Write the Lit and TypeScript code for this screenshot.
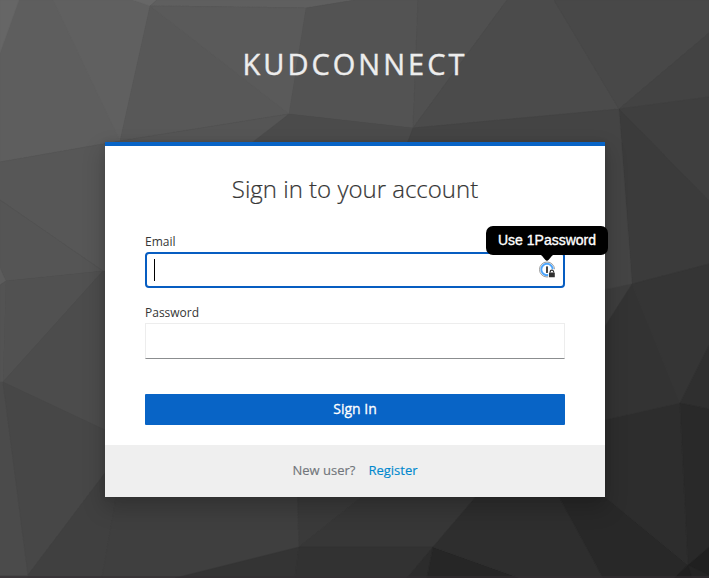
import { LitElement, html, css, svg } from "lit";
import { customElement } from "lit/decorators.js";

// Facets of the low-poly backdrop, painted in order: [fill, points]
const FACETS: [string, string][] = [
  ["#5e5e5e", "0,0 150,0 150,6 120,141 0,162"],
  ["#606060", "53,0 133,0 150,6 120,141"],
  ["#666666", "0,0 19,0 0,53"],
  ["#676767", "133,0 157,0 150,6"],
  ["#5f5f5f", "157,0 355,0 306,8 150,6"],
  ["#585858", "150,6 306,8 289,114 120,141"],
  ["#5a5a5a", "150,6 306,8 289,114"],
  ["#535353", "306,8 355,0 418,0 413,128 289,114"],
  ["#505050", "418,0 507,0 413,128"],
  ["#4b4b4b", "507,0 554,0 619,109 413,128"],
  ["#484848", "554,0 709,0 709,33 619,109"],
  ["#434343", "709,33 709,97 619,109"],
  ["#3f3f3f", "709,97 709,201 619,109"],
  ["#3b3b3b", "619,109 709,201 709,264 632,284"],
  ["#555555", "120,141 289,114 250,148 105,148"],
  ["#4b4b4b", "289,114 413,128 405,148 245,148"],
  ["#444444", "413,128 619,109 632,284 600,290 440,150 405,150"],
  ["#575757", "0,162 120,141 120,275 103,271 0,200"],
  ["#555555", "0,200 103,271 6,281 0,268"],
  ["#5c5c5c", "0,268 6,281 0,285"],
  ["#515151", "6,281 103,271 3,382"],
  ["#535353", "0,285 6,281 3,382 0,382"],
  ["#4c4c4c", "103,271 120,271 120,437 3,382"],
  ["#4b4b4b", "0,382 3,382 28,575 0,575"],
  ["#474747", "3,382 105,430 120,437 120,453 28,575"],
  ["#404040", "28,575 105,473 125,446 102,578 28,578"],
  ["#3f3f3f", "125,446 297,480 299,547 175,578 102,578"],
  ["#3a3a3a", "297,480 383,480 299,547"],
  ["#373737", "383,480 490,480 433,547 299,547"],
  ["#343434", "175,578 299,547 295,578"],
  ["#323232", "299,547 433,547 407,578 295,578"],
  ["#2c2c2c", "433,547 427,578 407,578"],
  ["#262626", "433,547 520,578 427,578"],
  ["#2e2e2e", "490,480 550,480 603,578 520,578 433,547"],
  ["#282828", "550,480 585,480 688,565 674,578 603,578"],
  ["#3d3d3d", "605,290 632,284 605,326"],
  ["#333333", "632,284 680,403 600,421 600,334"],
  ["#353535", "632,284 709,264 709,345 680,403"],
  ["#2f2f2f", "709,345 709,409 680,403"],
  ["#2d2d2d", "600,421 680,403 688,565 600,493"],
  ["#292929", "680,403 709,409 709,547 688,565"],
  ["#202020", "709,547 709,578 674,578 688,565"],
  ["#242424", "688,565 709,575 709,578 692,578"],
];

@customElement("low-poly-backdrop")
export class LowPolyBackdrop extends LitElement {
  static styles = css`
    :host { display: block; }
    svg { display: block; width: 100%; height: 100%; }
  `;
  render() {
    return html`<svg viewBox="0 0 709 578" preserveAspectRatio="none" aria-hidden="true">
      <rect width="709" height="578" fill="#444444" />
      ${FACETS.map(([fill, points]) => svg`<polygon points=${points} fill=${fill} stroke=${fill} stroke-width="0.35" />`)}
      <rect y="576" width="709" height="2" fill="#362f33" opacity="0.6" />
    </svg>`;
  }
}

@customElement("password-hint")
export class PasswordHint extends LitElement {
  static styles = css`
    :host { display: block; }
    .bubble {
      position: relative;
      width: 122px;
      height: 29px;
      border-radius: 7px;
      background: #000;
      color: #fff;
      font: 14px/28px "Liberation Sans", Arial, sans-serif;
      -webkit-text-stroke: 0.35px #fff;
      text-align: center;
      white-space: nowrap;
    }
    .tip {
      position: absolute;
      left: 53px;
      top: 28px;
      display: block;
    }
  `;
  render() {
    return html`<div class="bubble">Use 1Password<svg class="tip" width="16" height="8" viewBox="0 0 16 8"><path d="M0 0H16C12 1 10.5 6.7 8 6.7S4 1 0 0Z" fill="#000" /></svg></div>`;
  }
}

@customElement("app-root")
export class AppRoot extends LitElement {
  static styles = css`
    :host {
      display: block;
      position: relative;
      height: 578px;
      overflow: hidden;
      font-family: "Open Sans", sans-serif;
      color: #363636;
    }
    * { box-sizing: border-box; }
    .backdrop { position: absolute; inset: 0; }
    .page {
      position: relative;
      display: flex;
      flex-direction: column;
      align-items: center;
    }
    .brand {
      height: 142px;
      padding: 44px 0 0 1px;
      font-size: 29px;
      line-height: 40px;
      letter-spacing: 3px;
      text-transform: uppercase;
      color: #ededed;
      -webkit-text-stroke: 0.4px #ededed;
      white-space: nowrap;
    }
    .card {
      width: 500px;
      margin-left: 1px;
      height: 355px;
      display: flex;
      flex-direction: column;
      border-top: 4px solid #0864c6;
      background: #fff;
      box-shadow: 0 10px 20px 2px rgba(3, 3, 3, 0.19), 0 0 6px rgba(3, 3, 3, 0.1);
    }
    .form {
      flex: 1;
      display: flex;
      flex-direction: column;
      padding: 26px 40px 20px;
    }
    h1 {
      margin: 0;
      font-size: 24px;
      line-height: 34px;
      font-weight: 300;
      -webkit-text-stroke: 0.2px #363636;
      text-align: center;
      white-space: nowrap;
    }
    label {
      font-size: 12px;
      line-height: 18px;
    }
    .email-label { margin-top: 27px; }
    .password-label { margin-top: 16px; }
    .field {
      position: relative;
      height: 36px;
      display: flex;
      align-items: center;
      margin-top: 1px;
      background: #fff;
    }
    .focused {
      border: 2px solid #075dc1;
      border-radius: 4px;
      padding-left: 7px;
    }
    .caret { width: 1px; height: 22px; background: #000; }
    .idle {
      border: 1px solid #ededed;
      border-bottom-color: #8b8d8f;
    }
    .keyhole { margin: 0 6px 0 auto; display: block; }
    .hint {
      position: absolute;
      left: 339px;
      top: -28px;
    }
    button {
      height: 31px;
      margin: 35px 0 0;
      padding: 0 0 1px;
      border: 0;
      border-radius: 1px;
      background: #0864c6;
      color: #fff;
      font: 500 14px/30px "Open Sans", sans-serif;
      -webkit-text-stroke: 0.3px #fff;
    }
    .footer {
      height: 52px;
      display: flex;
      align-items: center;
      justify-content: center;
      gap: 13px;
      padding-bottom: 2px;
      background: #efefef;
      font-size: 13px;
      line-height: 20px;
      color: #72767b;
      -webkit-text-stroke: 0.15px currentColor;
    }
    .footer a { color: #0088ce; text-decoration: none; }
  `;

  render() {
    return html`
      <low-poly-backdrop class="backdrop"></low-poly-backdrop>
      <div class="page">
        <div class="brand">kudconnect</div>
        <main class="card">
          <div class="form">
            <h1>Sign in to your account</h1>
            <label class="email-label">Email</label>
            <div class="field focused">
              <span class="caret"></span>
              <svg class="keyhole" width="19" height="18" viewBox="0 0 19 18">
                <circle cx="9" cy="8.5" r="7.5" fill="#fff" stroke="#999" stroke-width="1" />
                <circle cx="9" cy="8.5" r="5.7" fill="#fff" stroke="#4ca5fc" stroke-width="1.9" />
                <rect x="8" y="5.3" width="2" height="6.6" rx=".4" fill="#444" />
                <path d="M10.2 18V9.8L12 8.2H19V18Z" fill="#fff" />
                <path d="M12.2 11.5V10.8a1.7 1.7 0 0 1 3.4 0V11.5" fill="none" stroke="#303030" stroke-width="1.2" />
                <rect x="11" y="11.5" width="5.8" height="4.7" rx=".5" fill="#303030" />
              </svg>
              <password-hint class="hint"></password-hint>
            </div>
            <label class="password-label">Password</label>
            <div class="field idle"></div>
            <button>Sign In</button>
          </div>
          <div class="footer"><span>New user?</span><a>Register</a></div>
        </main>
      </div>
    `;
  }
}
